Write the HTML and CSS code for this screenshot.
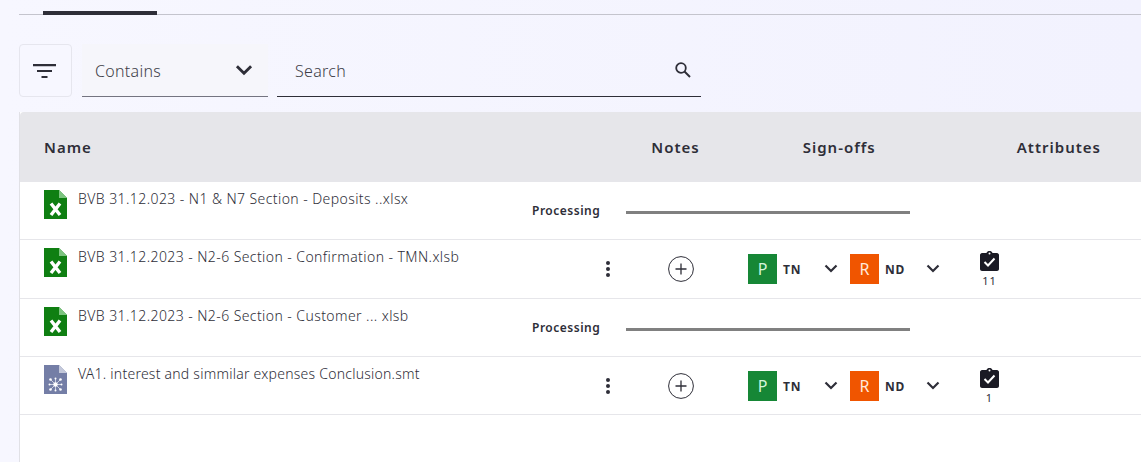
FILE: index.html
```html
<!DOCTYPE html>
<html lang="en">
<head>
<meta charset="UTF-8">
<meta name="viewport" content="width=device-width, initial-scale=1.0">
<title>Documents</title>
<link rel="stylesheet" href="styles.css">
</head>
<body>

<svg class="defs" width="0" height="0">
  <symbol id="icon-xls" viewBox="0 0 23 29">
    <path d="M0 0H15L23 8V29H0Z" fill="#0f7f12"/>
    <path d="M15 0L23 8H15Z" fill="#7cc47f"/>
    <path d="M7 13.500L16 25M16 13.500L7 25" stroke="#fff" stroke-width="3.400" fill="none"/>
  </symbol>
  <symbol id="icon-smt" viewBox="0 0 23 29">
    <path d="M0 0H15L23 8V29H0Z" fill="#747ea6"/>
    <path d="M15 0L23 8H15Z" fill="#c3c8da"/>
    <path d="M6 14L17 25M17 14L6 25M11.500 13V26M5 19.500H18" stroke="#dfe2ec" stroke-width=".8" fill="none"/>
    <circle cx="11.500" cy="19.500" r="2.200" fill="#fff"/>
    <circle cx="6.500" cy="14.500" r="1.300" fill="#fff"/>
    <circle cx="16.500" cy="14.500" r="1.300" fill="#fff"/>
    <circle cx="6.500" cy="24.500" r="1.300" fill="#fff"/>
    <circle cx="16.500" cy="24.500" r="1.300" fill="#fff"/>
    <circle cx="11.500" cy="13.500" r="1" fill="#fff"/>
    <circle cx="11.500" cy="25.500" r="1" fill="#fff"/>
    <circle cx="5.500" cy="19.500" r="1" fill="#fff"/>
    <circle cx="17.500" cy="19.500" r="1" fill="#fff"/>
  </symbol>
  <symbol id="icon-chevron" viewBox="0 0 14 9">
    <path d="M1.500 1.500L7 7L12.500 1.500" stroke="#2e2e38" stroke-width="2.200" fill="none"/>
  </symbol>
  <symbol id="icon-kebab" viewBox="0 0 6 18">
    <circle cx="3" cy="3" r="2" fill="#2e2e38"/>
    <circle cx="3" cy="9" r="2" fill="#2e2e38"/>
    <circle cx="3" cy="15" r="2" fill="#2e2e38"/>
  </symbol>
  <symbol id="icon-plus" viewBox="0 0 26 26">
    <circle cx="13" cy="13" r="12.400" stroke="#2e2e38" fill="none"/>
    <path d="M13 7.500V18.500M7.500 13H18.500" stroke="#2e2e38" stroke-width="1.300" fill="none"/>
  </symbol>
  <symbol id="icon-task" viewBox="0 0 19 20">
    <path d="M2 2H6.500C7 .5 8.200 0 9.500 0S12 .5 12.500 2H17C18 2 19 3 19 4V18C19 19 18 20 17 20H2C1 20 0 19 0 18V4C0 3 1 2 2 2Z" fill="#1a1a24"/>
    <path d="M4.500 11L8 14.500L14.500 7.500" stroke="#fff" stroke-width="2" fill="none"/>
    <circle cx="9.500" cy="2.500" r="1" fill="#fff"/>
  </symbol>
</svg>

<div class="tabs"><span class="tab-active"></span></div>

<div class="toolbar">
  <button class="filter-btn">
    <svg width="23" height="14" viewBox="0 0 23 14"><path d="M0 1.200H23M4 7H19M8.500 13H14.500" stroke="#2e2e38" stroke-width="2.200" fill="none"/></svg>
  </button>
  <div class="select">
    <span>Contains</span>
    <svg class="select-chev" width="18" height="12"><use href="#icon-chevron"/></svg>
  </div>
  <div class="search">
    <span>Search</span>
    <svg width="18" height="18" viewBox="0 0 18 18"><circle cx="7" cy="7" r="4.800" stroke="#2e2e38" stroke-width="1.800" fill="none"/><path d="M10.500 10.500L16 16" stroke="#2e2e38" stroke-width="2" fill="none"/></svg>
  </div>
</div>

<div class="table">
  <div class="head">
    <div>Name</div>
    <div class="head-notes">Notes</div>
    <div class="head-sign">Sign-offs</div>
    <div class="head-attr">Attributes</div>
  </div>

  <div class="row">
    <div class="name"><svg class="file" width="23" height="29"><use href="#icon-xls"/></svg><span>BVB 31.12.023 - N1 &amp; N7 Section - Deposits ..xlsx</span></div>
    <div class="status">Processing</div>
    <div class="bar"></div>
  </div>

  <div class="row">
    <div class="name"><svg class="file" width="23" height="29"><use href="#icon-xls"/></svg><span>BVB 31.12.2023 - N2-6 Section - Confirmation - TMN.xlsb</span></div>
    <div class="menu"><svg width="6" height="18"><use href="#icon-kebab"/></svg></div>
    <div class="notes"><svg width="26" height="26"><use href="#icon-plus"/></svg></div>
    <div class="signoffs">
      <span class="badge green">P</span><span class="who">TN</span><svg class="chev" width="14" height="9"><use href="#icon-chevron"/></svg>
      <span class="badge orange">R</span><span class="who">ND</span><svg class="chev" width="14" height="9"><use href="#icon-chevron"/></svg>
    </div>
    <div class="attrs"><svg width="19" height="20"><use href="#icon-task"/></svg><span>11</span></div>
  </div>

  <div class="row">
    <div class="name"><svg class="file" width="23" height="29"><use href="#icon-xls"/></svg><span>BVB 31.12.2023 - N2-6 Section - Customer ... xlsb</span></div>
    <div class="status">Processing</div>
    <div class="bar"></div>
  </div>

  <div class="row">
    <div class="name name-plain"><svg class="file" width="23" height="29"><use href="#icon-smt"/></svg><span>VA1. interest and simmilar expenses Conclusion.smt</span></div>
    <div class="menu"><svg width="6" height="18"><use href="#icon-kebab"/></svg></div>
    <div class="notes"><svg width="26" height="26"><use href="#icon-plus"/></svg></div>
    <div class="signoffs">
      <span class="badge green">P</span><span class="who">TN</span><svg class="chev" width="14" height="9"><use href="#icon-chevron"/></svg>
      <span class="badge orange">R</span><span class="who">ND</span><svg class="chev" width="14" height="9"><use href="#icon-chevron"/></svg>
    </div>
    <div class="attrs"><svg width="19" height="20"><use href="#icon-task"/></svg><span>1</span></div>
  </div>
</div>

</body>
</html>
```

FILE: styles.css
```css
html, body {
  height: 100%;
}
body {
  margin: 0;
  padding: 0 0 0 19px;
  box-sizing: border-box;
  overflow: hidden;
  font-family: "Noto Sans", sans-serif;
  color: #2e2e38;
  background: linear-gradient(90deg, #f7f7ff, #f2f2fe);
}
.defs {
  position: absolute;
}
.tabs {
  display: flow-root;
  height: 14px;
  border-bottom: 1px solid #c4c4cd;
}
.tab-active {
  display: block;
  width: 114px;
  height: 4px;
  margin: 11px 0 0 24px;
  background: #2e2e38;
}
.toolbar {
  display: flex;
  margin-top: 29px;
  height: 53px;
}
.filter-btn {
  width: 53px;
  height: 53px;
  padding: 0 2px 0 0;
  border: 1px solid #e6e6ee;
  border-radius: 4px;
  background: #f7f7ff;
  display: flex;
  align-items: center;
  justify-content: center;
}
.select {
  width: 186px;
  margin-left: 10px;
  padding: 2px 15px 0 13px;
  box-sizing: border-box;
  display: flex;
  align-items: center;
  justify-content: space-between;
  background: #f6f6fb;
  border-bottom: 1px solid #747480;
  font-size: 16px;
  font-weight: 300;
  letter-spacing: 0.3px;
  color: #3f3f49;
}
.select-chev {
  margin-top: -2px;
}
.search {
  width: 424px;
  margin-left: 9px;
  padding: 2px 9px 0 18px;
  box-sizing: border-box;
  display: flex;
  align-items: center;
  justify-content: space-between;
  border-bottom: 1px solid #2e2e38;
  font-size: 16px;
  font-weight: 300;
  letter-spacing: 0.3px;
  color: #3f3f49;
}
.search svg {
  margin-top: -2px;
}
.table {
  margin-top: 15px;
  height: 350px;
  background: #fff;
  border-left: 1px solid #e1e1e6;
}
.head {
  height: 70px;
  padding-left: 24px;
  display: flex;
  align-items: center;
  background: #e6e6ea;
  border-radius: 4px 0 0 0;
  font-size: 15px;
  font-weight: 600;
  letter-spacing: 1px;
}
.head-notes {
  margin-left: auto;
}
.head-sign {
  margin-left: 103px;
}
.head-attr {
  margin-left: 141px;
  margin-right: 40px;
}
.row {
  height: 58.33px;
  box-sizing: border-box;
  padding-left: 24px;
  display: grid;
  grid-template-columns: 488px 94px 110px 224px 1fr;
  align-items: center;
  border-bottom: 1px solid #e6e6ea;
}
.name {
  align-self: start;
  padding-top: 8px;
  display: flex;
  font-size: 14px;
  font-weight: 300;
  letter-spacing: 0.42px;
  color: #2e2e38;
}
.name-plain {
  letter-spacing: 0.24px;
}
.name span {
  line-height: 18px;
}
.file {
  flex: none;
  margin-right: 11px;
}
.status {
  font-size: 12px;
  font-weight: 600;
  letter-spacing: 0.5px;
}
.bar {
  grid-column: 3 / 5;
  width: 284px;
  height: 3px;
  margin-top: 4px;
  background: #808080;
}
.menu {
  justify-self: end;
  margin-right: 15px;
  display: flex;
}
.notes {
  display: flex;
  justify-content: center;
}
.signoffs {
  padding-left: 12px;
  display: flex;
  align-items: center;
}
.badge {
  width: 29px;
  height: 30px;
  display: flex;
  align-items: center;
  justify-content: center;
  font-size: 16px;
  color: #fff;
}
.green {
  background: #168736;
  color: #d5f5da;
}
.orange {
  background: #f05500;
  color: #ffe8da;
}
.who {
  width: 21px;
  margin-left: 6px;
  padding-top: 1px;
  font-size: 12px;
  font-weight: 700;
  letter-spacing: 0.8px;
}
.chev {
  margin: 0 12px 0 20px;
}
.attrs {
  padding-left: 20px;
  width: 19px;
  margin-top: 1px;
  display: flex;
  flex-direction: column;
  align-items: center;
  font-size: 11px;
  letter-spacing: 1px;
  line-height: 13px;
}
.attrs span {
  margin-top: 3px;
}
```
